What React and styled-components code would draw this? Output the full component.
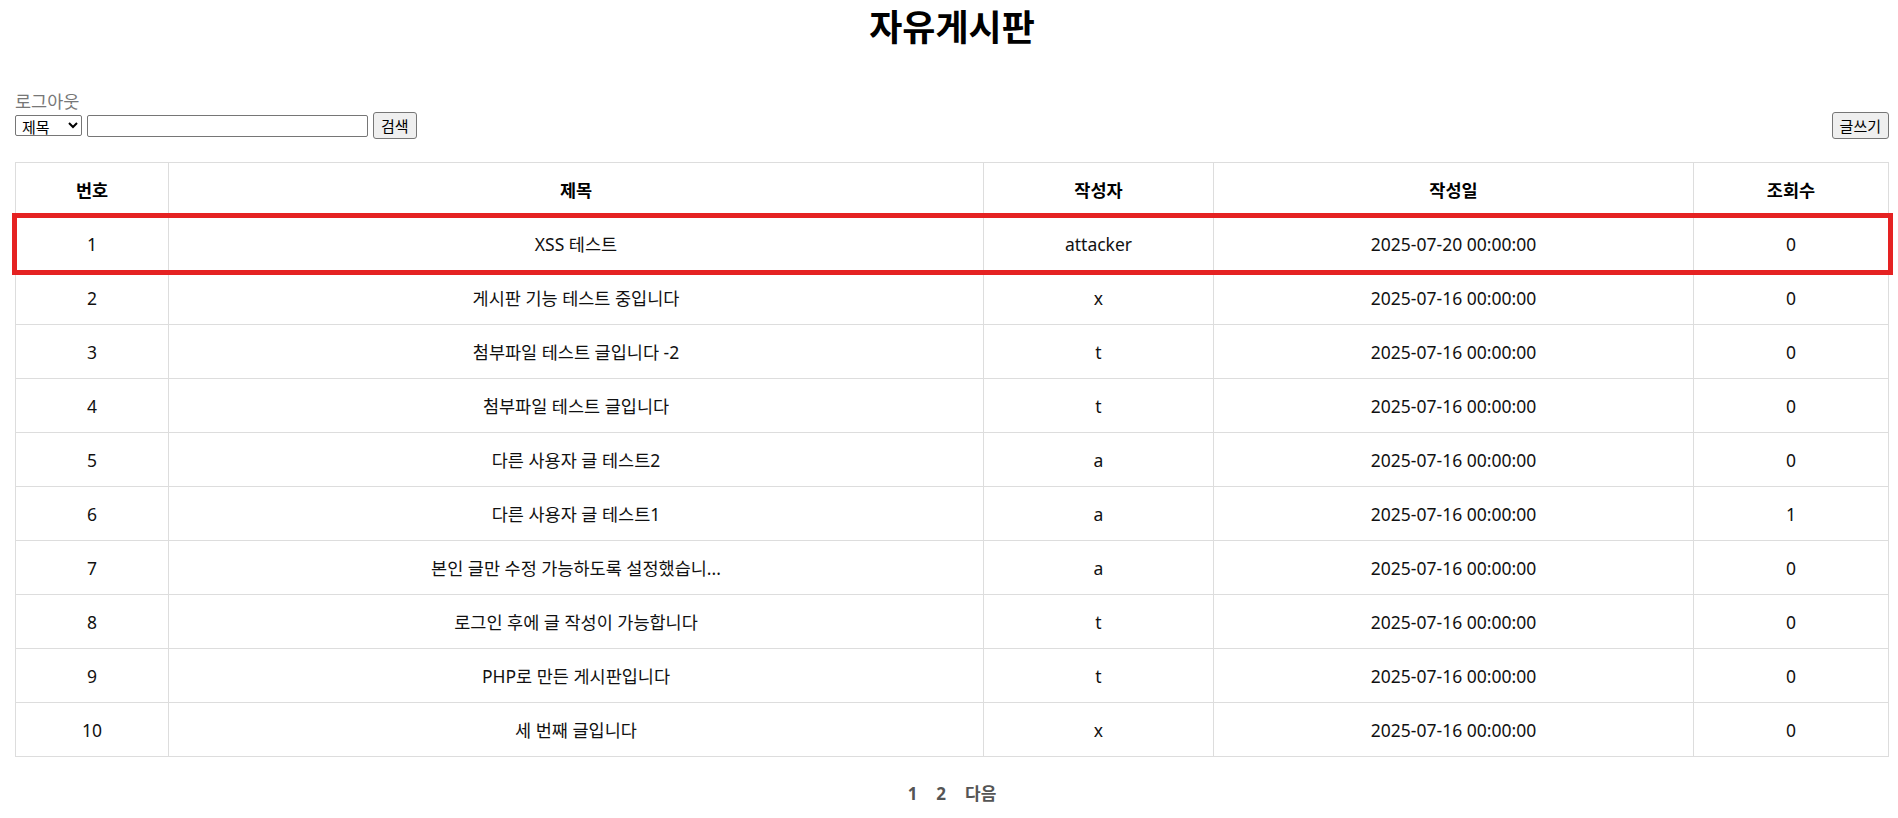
import React from 'react'
import styled, { createGlobalStyle } from 'styled-components'

const GlobalStyle = createGlobalStyle`
  body {
    margin: 0;
    background: #fff;
    font-family: "Noto Sans", "Noto Sans CJK KR", sans-serif;
    color: #111;
  }
`

const Page = styled.div`
  padding: 8px 9px 20px 15px;
`

const Title = styled.h1`
  margin: 0;
  text-align: center;
  font-size: 36px;
  line-height: 40px;
  font-weight: 700;
  color: #000;
`

const Logout = styled.a`
  display: block;
  margin-top: 42px;
  font-size: 17.5px;
  line-height: 22px;
  color: #777;
  text-decoration: none;
  width: max-content;
`

const Toolbar = styled.div`
  display: flex;
  justify-content: space-between;
  align-items: center;
  height: 27px;
`

const SearchForm = styled.form`
  display: flex;
  align-items: center;
  gap: 5px;
`

const Select = styled.select`
  width: 67px;
  height: 21px;
  font-size: 15px;
  font-family: inherit;
  color: #000;
  border: 1px solid #767676;
  border-radius: 2px;
  padding: 0 2px;
  background: #fff;
`

const Input = styled.input`
  width: 281px;
  height: 22px;
  box-sizing: border-box;
  border: 1px solid #767676;
  border-radius: 2px;
  font-size: 15px;
`

const Button = styled.button`
  height: 27px;
  padding: 0 7px;
  font-family: inherit;
  font-size: 15px;
  color: #000;
  background: #efefef;
  border: 1px solid #767676;
  border-radius: 3px;
`

const Table = styled.table`
  margin-top: 23px;
  width: 100%;
  border-collapse: collapse;
  font-size: 17.5px;
  table-layout: fixed;
`

const Th = styled.th`
  box-sizing: border-box;
  width: ${p => p.$w || 'auto'};
  height: 54px;
  padding: 0 8px;
  border: 1px solid #ddd;
  font-weight: 700;
  text-align: center;
  color: #000;
`

const Td = styled.td`
  height: 53px;
  padding: 0 8px;
  border: 1px solid #ddd;
  text-align: center;
  white-space: nowrap;
`

const Row = styled.tr`
  ${p => p.$marked && `
    outline: 5px solid #e52222;
    outline-offset: -1px;
  `}
`

const Pager = styled.div`
  margin-top: 25px;
  display: flex;
  justify-content: center;
  gap: 9px;
`

const PageLink = styled.a`
  padding: 0 5px;
  font-size: 17px;
  line-height: 24px;
  font-weight: 700;
  color: #555;
  text-decoration: none;
`

const posts = [
  [1, 'XSS 테스트', 'attacker', '2025-07-20 00:00:00', 0],
  [2, '게시판 기능 테스트 중입니다', 'x', '2025-07-16 00:00:00', 0],
  [3, '첨부파일 테스트 글입니다 -2', 't', '2025-07-16 00:00:00', 0],
  [4, '첨부파일 테스트 글입니다', 't', '2025-07-16 00:00:00', 0],
  [5, '다른 사용자 글 테스트2', 'a', '2025-07-16 00:00:00', 0],
  [6, '다른 사용자 글 테스트1', 'a', '2025-07-16 00:00:00', 1],
  [7, '본인 글만 수정 가능하도록 설정했습니...', 'a', '2025-07-16 00:00:00', 0],
  [8, '로그인 후에 글 작성이 가능합니다', 't', '2025-07-16 00:00:00', 0],
  [9, 'PHP로 만든 게시판입니다', 't', '2025-07-16 00:00:00', 0],
  [10, '세 번째 글입니다', 'x', '2025-07-16 00:00:00', 0],
]

const App = () => {
  return (
    <Page>
      <GlobalStyle />
      <Title>자유게시판</Title>

      <Logout href="#">로그아웃</Logout>
      <Toolbar>
        <SearchForm onSubmit={e => e.preventDefault()}>
          <Select defaultValue="title">
            <option value="title">제목</option>
            <option value="writer">작성자</option>
          </Select>
          <Input type="text" />
          <Button>검색</Button>
        </SearchForm>
        <Button>글쓰기</Button>
      </Toolbar>

      <Table>
        <thead>
          <tr>
            <Th $w="153px">번호</Th>
            <Th $w="815px">제목</Th>
            <Th $w="230px">작성자</Th>
            <Th $w="480px">작성일</Th>
            <Th>조회수</Th>
          </tr>
        </thead>
        <tbody>
          {posts.map(([no, title, writer, date, views]) => (
            <Row key={no} $marked={no === 1}>
              <Td>{no}</Td>
              <Td>{title}</Td>
              <Td>{writer}</Td>
              <Td>{date}</Td>
              <Td>{views}</Td>
            </Row>
          ))}
        </tbody>
      </Table>

      <Pager>
        <PageLink href="#">1</PageLink>
        <PageLink href="#">2</PageLink>
        <PageLink href="#">다음</PageLink>
      </Pager>
    </Page>
  )
}

export default App
